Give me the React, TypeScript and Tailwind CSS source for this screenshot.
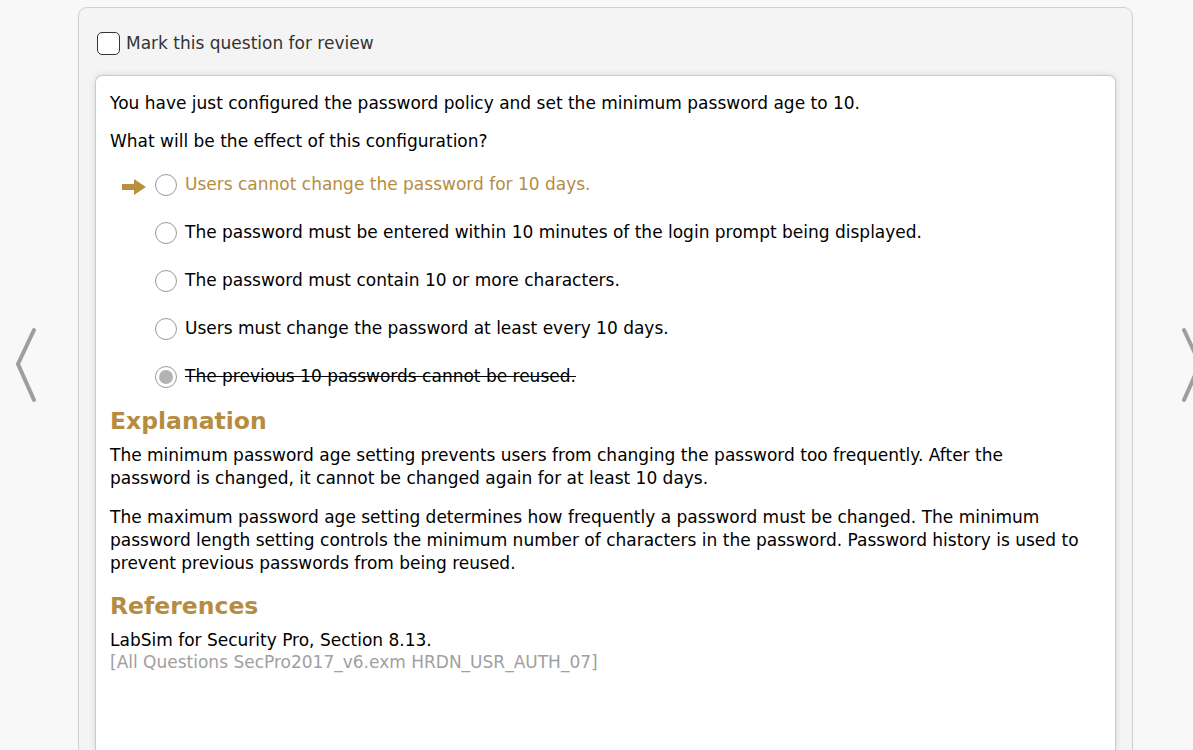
import { ReactNode } from 'react'

type Option = {
  text: string
  state?: 'correct' | 'wrong'
}

const options: Option[] = [
  { text: 'Users cannot change the password for 10 days.', state: 'correct' },
  { text: 'The password must be entered within 10 minutes of the login prompt being displayed.' },
  { text: 'The password must contain 10 or more characters.' },
  { text: 'Users must change the password at least every 10 days.' },
  { text: 'The previous 10 passwords cannot be reused.', state: 'wrong' },
]

const Chevron = ({ dir }: { dir: 'left' | 'right' }) => (
  <svg width="26" height="80" viewBox="0 0 26 80" className="shrink-0">
    <path
      d={dir === 'left' ? 'M21 4 L5 38 L21 74' : 'M5 4 L21 38 L5 74'}
      fill="none"
      stroke="#9e9e9e"
      strokeWidth="4"
      strokeLinecap="round"
    />
  </svg>
)

const Arrow = () => (
  <svg width="24" height="16" viewBox="0 0 24 16">
    <path d="M0 5 H12 V0 L24 8 L12 16 V11 H0 Z" fill="#b8903e" />
  </svg>
)

const Radio = ({ checked }: { checked?: boolean }) => (
  <span className="flex h-[22px] w-[22px] shrink-0 items-center justify-center rounded-full border border-[#9a9a9a] bg-white">
    {checked && <span className="h-[14px] w-[14px] rounded-full bg-[#b3b3b3]" />}
  </span>
)

const Heading = ({ children }: { children: ReactNode }) => (
  <h2 className="text-[23.5px] font-bold leading-[34px] text-[#b68d40]">{children}</h2>
)

export default function App() {
  return (
    <div
      className="flex h-[750px] w-[1193px] overflow-hidden bg-[#f8f8f8] text-[17px] text-black"
      style={{ fontFamily: 'Tahoma, "DejaVu Sans", sans-serif' }}
    >
      {/* left nav */}
      <div className="flex w-[78px] shrink-0 items-start pt-[326px] pl-[13px]">
        <Chevron dir="left" />
      </div>

      {/* question card */}
      <div className="mt-[7px] flex w-[1055px] shrink-0 flex-col rounded-t-[9px] border border-b-0 border-[#cfcfcf] bg-[#f4f4f4] px-[16px]">
        <label className="flex items-center gap-[6px] pt-[23px] pb-[18px] pl-[2px] text-[#333]">
          <span className="h-[23px] w-[23px] rounded-[5px] border border-[#333] bg-white" />
          Mark this question for review
        </label>

        <div className="flex-1 rounded-t-[7px] border border-b-0 border-[#c9c9c9] bg-white pt-[16px] pr-[33px] pl-[14px] shadow-[0_0_6px_rgba(0,0,0,0.12)]">
          <p className="leading-[23px]">
            You have just configured the password policy and set the minimum password age to 10.
          </p>
          <p className="mt-[15px] leading-[23px]">What will be the effect of this configuration?</p>

          <div className="mt-[21px] flex flex-col gap-[26px] pl-[12px]">
            {options.map((o) => (
              <div key={o.text} className="flex h-[22px] items-center">
                <span className="flex w-[33px] items-center pt-[4px]">{o.state === 'correct' && <Arrow />}</span>
                <Radio checked={o.state === 'wrong'} />
                <span
                  className={
                    'ml-[8px] whitespace-nowrap ' +
                    (o.state === 'correct'
                      ? 'text-[#b68d40]'
                      : o.state === 'wrong'
                        ? 'line-through'
                        : '')
                  }
                >
                  {o.text}
                </span>
              </div>
            ))}
          </div>

          <div className="mt-[16px]">
            <Heading>Explanation</Heading>
            <p className="mt-[6px] leading-[23px]">
              The minimum password age setting prevents users from changing the password too frequently. After the
              password is changed, it cannot be changed again for at least 10 days.
            </p>
            <p className="mt-[16px] leading-[23px]">
              The maximum password age setting determines how frequently a password must be changed. The minimum
              password length setting controls the minimum number of characters in the password. Password history is
              used to prevent previous passwords from being reused.
            </p>
          </div>

          <div className="mt-[14px]">
            <Heading>References</Heading>
            <p className="mt-[6px] leading-[22px]">LabSim for Security Pro, Section 8.13.</p>
            <p className="leading-[22px] text-[#a0a0a0]">[All Questions SecPro2017_v6.exm HRDN_USR_AUTH_07]</p>
          </div>
        </div>
      </div>

      {/* right nav */}
      <div className="flex flex-1 items-start pt-[326px] pl-[46px]">
        <Chevron dir="right" />
      </div>
    </div>
  )
}
